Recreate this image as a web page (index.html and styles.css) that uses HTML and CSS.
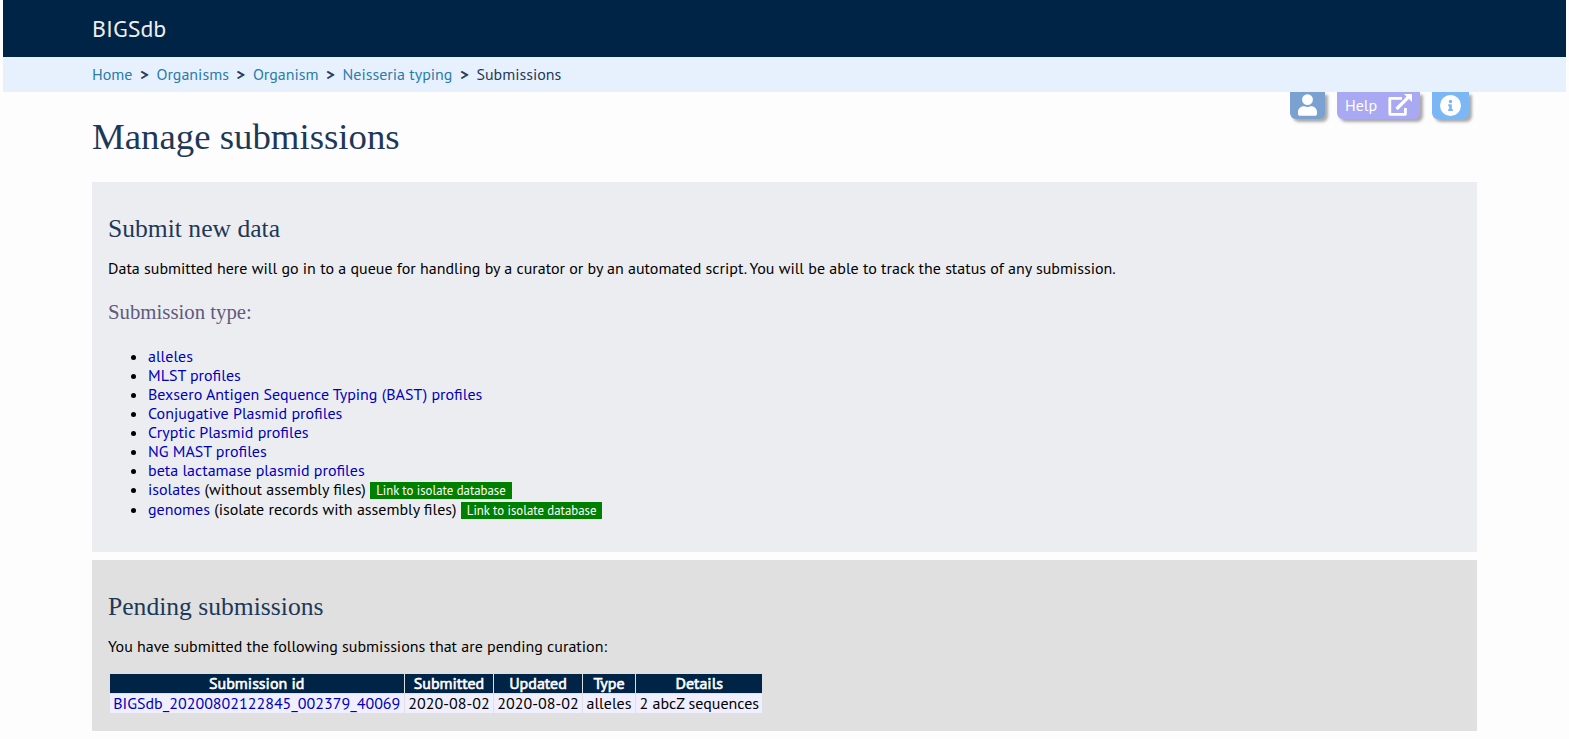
FILE: index.html
```html
<!DOCTYPE html>
<html lang="en">
<head>
	<meta charset="utf-8">
	<meta name="viewport" content="width=device-width, initial-scale=1">
	<title>Manage submissions - BIGSdb</title>
	<link rel="stylesheet" href="styles.css">
</head>
<body>
	<header class="banner">BIGSdb</header>
	<nav class="breadcrumbs">
		<a href="#">Home</a><b>&gt;</b>
		<a href="#">Organisms</a><b>&gt;</b>
		<a href="#">Organism</a><b>&gt;</b>
		<a href="#">Neisseria typing</a><b>&gt;</b>
		<span>Submissions</span>
	</nav>
	<main>
		<div class="title">
			<h1>Manage submissions</h1>
			<div class="menu">
				<a class="icon user" href="#" title="User account">
					<svg viewBox="0 0 448 512" width="19" height="22"><path fill="currentColor" d="M224 256a128 128 0 1 0 0-256 128 128 0 0 0 0 256zm90 32h-17a174 174 0 0 1-146 0h-17C60 288 0 348 0 422v42c0 27 21 48 48 48h352c27 0 48-21 48-48v-42c0-74-60-134-134-134z"/></svg>
				</a>
				<a class="icon help" href="#">Help
					<svg viewBox="0 0 24 22" width="24" height="22"><path fill="none" stroke="currentColor" stroke-width="2.800" stroke-linejoin="round" d="M14 4.300H1.800v16h15.600V14"/><path fill="none" stroke="currentColor" stroke-width="3.200" d="M8.500 15L20.500 3"/><path fill="currentColor" d="M16 0h7.200q.8 0 .8.800V8z"/></svg>
				</a>
				<a class="icon info" href="#" title="Show field information">
					<svg viewBox="8 8 496 496" width="21" height="21"><path fill="currentColor" fill-rule="evenodd" d="M256 8a248 248 0 1 0 0 496 248 248 0 0 0 0-496zm0 110a42 42 0 1 1 0 84 42 42 0 0 1 0-84zm56 254c0 7-5 12-12 12h-88c-7 0-12-5-12-12v-24c0-7 5-12 12-12h12v-64h-12c-7 0-12-5-12-12v-24c0-7 5-12 12-12h64c7 0 12 5 12 12v100h12c7 0 12 5 12 12z"/></svg>
				</a>
			</div>
		</div>
		<section class="box submit">
			<h2>Submit new data</h2>
			<p>Data submitted here will go in to a queue for handling by a curator or by an automated script. You will be able to track the status of any submission.</p>
			<h3>Submission type:</h3>
			<ul>
				<li><a href="#">alleles</a></li>
				<li><a href="#">MLST profiles</a></li>
				<li><a href="#">Bexsero Antigen Sequence Typing (BAST) profiles</a></li>
				<li><a href="#">Conjugative Plasmid profiles</a></li>
				<li><a href="#">Cryptic Plasmid profiles</a></li>
				<li><a href="#">NG MAST profiles</a></li>
				<li><a href="#">beta lactamase plasmid profiles</a></li>
				<li class="linked"><a href="#">isolates</a> (without assembly files) <a class="link" href="#">Link to isolate database</a></li>
				<li class="linked"><a href="#">genomes</a> (isolate records with assembly files) <a class="link" href="#">Link to isolate database</a></li>
			</ul>
		</section>
		<section class="box pending">
			<h2>Pending submissions</h2>
			<p>You have submitted the following submissions that are pending curation:</p>
			<table>
				<colgroup><col class="id"><col class="date"><col class="date"><col class="type"><col class="details"></colgroup>
				<tr><th>Submission id</th><th>Submitted</th><th>Updated</th><th>Type</th><th>Details</th></tr>
				<tr><td><a href="#">BIGSdb_20200802122845_002379_40069</a></td><td>2020-08-02</td><td>2020-08-02</td><td>alleles</td><td>2 abcZ sequences</td></tr>
			</table>
		</section>
	</main>
</body>
</html>
```
FILE: styles.css
```css
body{margin:0 3px;background:#fdfdfe;color:#000;font:16px/19px "PT Sans","Open Sans",sans-serif;overflow:hidden;}
a{color:#00b;text-decoration:none;}
h1,h2,h3{font-family:"Liberation Serif",serif;font-weight:normal;margin:0;color:#1e3858;}
h1{font-size:36.8px;line-height:44px;}
h2{font-size:25.6px;line-height:30px;}
h3{font-size:20.8px;line-height:24px;color:#5f5a7d;}
p{margin:0;}

.banner{height:57px;padding-left:89px;box-sizing:border-box;background:#002446;color:#eee;font-size:24px;line-height:57px;}
.breadcrumbs{display:flex;align-items:center;height:35px;padding-left:89px;background:#e7f1fe;color:#1e3858;}
.breadcrumbs a{color:#2a7cab;}
.breadcrumbs b{width:24px;text-align:center;font-weight:normal;-webkit-text-stroke:.6px;}

main{margin:0 89px;}
.title{display:flex;justify-content:space-between;height:90px;}
.title h1{padding-top:23px;}
.menu{display:flex;gap:12px;padding-right:8px;}
.icon{display:flex;align-items:center;justify-content:center;height:27px;padding-bottom:1px;box-sizing:border-box;color:#fff;border-radius:0 0 6px 6px;box-shadow:3px 3px 3px #aaa;}
.user{width:35px;background:#7ba1d0;}
.help{width:83px;gap:11px;background:#a9a9f3;}
.info{width:37px;background:#7bb7f5;}

.box{padding:0 16px;overflow:hidden;}
.submit{height:370px;background:#ecedf1;}
.pending{height:171px;margin-top:8px;background:#e0e0e0;}
.box h2{margin:32px 0 15px;}
.box h3{margin:22px 0 23px;}
ul{margin:0;padding-left:40px;}
.linked{height:20px;}
.link{padding:0 6px;background:#008000;color:#fff;font-size:12.8px;line-height:16px;}

table{margin:18px 0 0 2px;border-collapse:collapse;table-layout:fixed;width:652px;white-space:nowrap;}
th,td{padding:0 0 0 1px;height:19px;text-align:center;border-left:1px solid #e0e0e0;}
th:first-child,td:first-child{border-left:0;padding:0;}
th{background:#002446;color:#fff;font-weight:normal;-webkit-text-stroke:.6px;}
td{background:#f0efff;border-top:1px solid #e0e0e0;}
.id{width:294px;}
.date{width:89px;}
.type{width:53px;}
.details{width:127px;}
```
